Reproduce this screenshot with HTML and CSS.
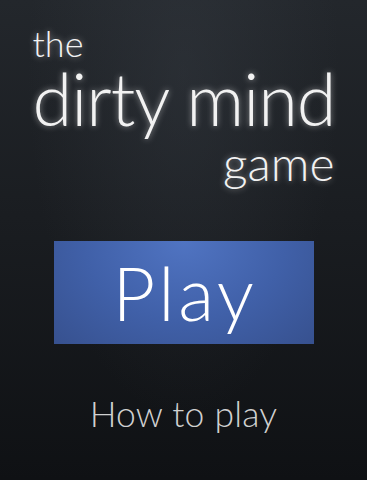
FILE: index.html
```html
<!DOCTYPE html>
<html>
  <head>
    <meta charset="utf-8" />
    <link rel="stylesheet" href="styles.css">
  </head>
  <body>
    <div class="screen">
      <div class="title">
        <div class="title-the">the</div>
        <div class="title-main">dirty mind</div>
        <div class="title-game">game</div>
      </div>

      <button class="play-button">Play</button>

      <div class="how-to">How to play</div>
    </div>
  </body>
</html>
```

FILE: styles.css
```css
body {
  margin: 0;
  padding: 0;
  width: 367px;
  height: 480px;
  overflow: hidden;
  font-family: Lato, "Helvetica Neue", "Liberation Sans", sans-serif;
  background: #121417;
}

.screen {
  height: 480px;
  display: flex;
  flex-direction: column;
  align-items: center;
  background:
    radial-gradient(ellipse at 50% 15%, rgba(60, 66, 74, 0.35) 0%, rgba(60, 66, 74, 0) 60%),
    linear-gradient(180deg, #23272c 0%, #1a1d21 45%, #0f1114 100%);
}

.title {
  width: 302px;
  margin-top: 28px;
  display: flex;
  flex-direction: column;
  color: #f2f2f2;
  font-weight: 300;
  text-shadow: 0 0 6px rgba(255, 255, 255, 0.5);
}

.title-the {
  font-size: 36px;
  line-height: 30px;
}

.title-main {
  font-size: 72px;
  line-height: 80px;
  letter-spacing: -1px;
  white-space: nowrap;
}

.title-game {
  align-self: flex-end;
  font-size: 48px;
  line-height: 50px;
}

.play-button {
  margin-top: 53px;
  width: 260px;
  height: 103px;
  border: none;
  padding: 0 0 0 3px;
  background: radial-gradient(ellipse at 50% 0%, #5074c2 0%, #4060a8 55%, #37518f 100%);
  color: white;
  font-family: inherit;
  font-size: 74px;
  font-weight: 300;
  letter-spacing: 3.5px;
  cursor: pointer;
}

.how-to {
  margin-top: 48px;
  font-size: 35.5px;
  font-weight: 300;
  letter-spacing: 0.2px;
  color: #d0d0d0;
}
```
